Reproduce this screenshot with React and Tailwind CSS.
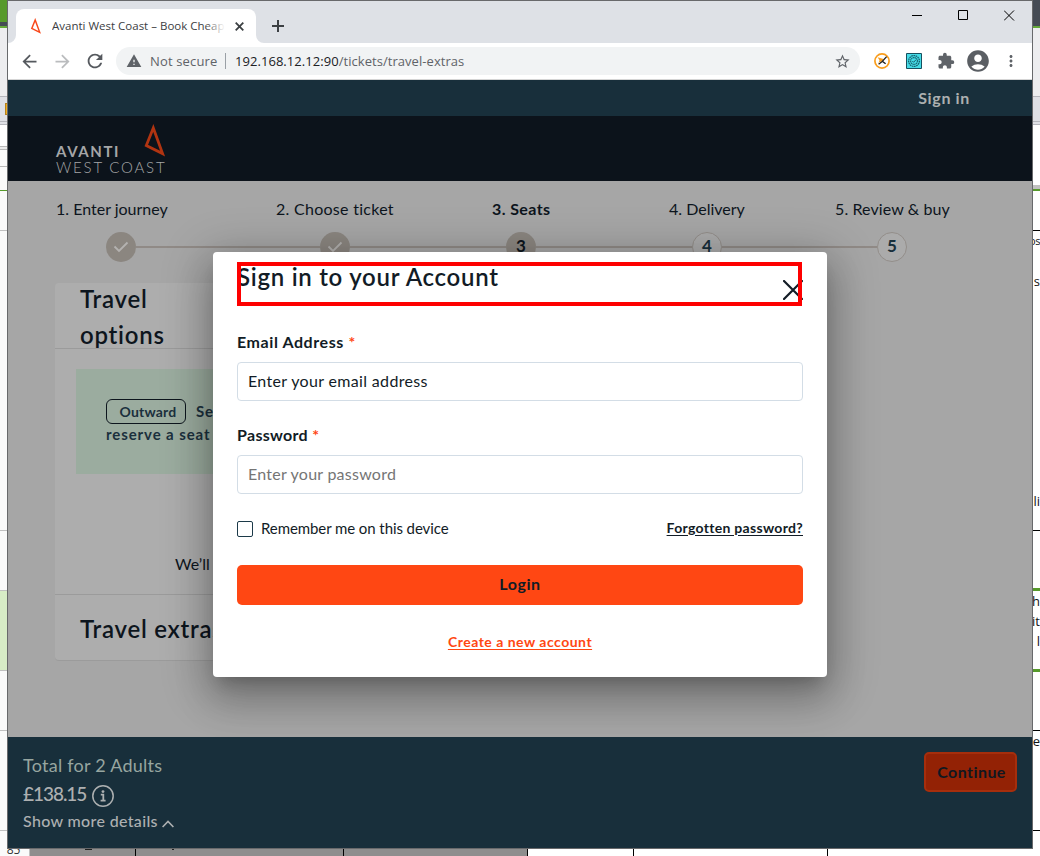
import React from "react";
import {
  MdArrowBack,
  MdArrowForward,
  MdRefresh,
  MdWarning,
  MdStarBorder,
  MdExtension,
  MdAccountCircle,
  MdMoreVert,
} from "react-icons/md";

function AvantiMark({ className, color, stroke }) {
  return (
    <svg className={className} viewBox="0 0 22 33" fill="none">
      <path
        d="M9.3 4 L2.3 21.6 L18.6 29.6 Z"
        stroke={color}
        strokeWidth={stroke}
        strokeLinejoin="miter"
        strokeMiterlimit="8"
      />
    </svg>
  );
}

function LeftStrip() {
  return (
    <div className="flex w-[7px] shrink-0 flex-col overflow-hidden">
      <div className="h-[22px] shrink-0 bg-[#579a2b]" />
      <div className="h-1 shrink-0 bg-[#454b54]" />
      <div className="h-0.5 shrink-0 bg-[#65a93a]" />
      <div className="h-[68px] shrink-0 bg-[#ededef]" />
      <div className="flex h-[25px] shrink-0 items-center justify-end border-t border-[#b6b7bd] bg-[#dfe0e5]">
        <div className="h-3 w-0.5 border-y border-l border-[#b5811c] bg-[#f0b020]" />
      </div>
      <div className="h-1 shrink-0 border-y border-[#b6b7bd] bg-[#dfe0e5]" />
      <div className="h-[21px] shrink-0 bg-white" />
      <div className="h-1 shrink-0 border-y border-[#b9b9b9] bg-[#ececec]" />
      <div className="h-4 shrink-0 bg-[#fafafa]" />
      <div className="h-6 shrink-0 border-t border-[#b9b9b9] bg-[#fafafa]" />
      <div className="h-10 shrink-0 border-t border-[#579a2b] bg-[#fafafa]" />
      <div className="h-[300px] shrink-0 border-t border-[#c0c0c0] bg-[#fafafa]" />
      <div className="h-[60px] shrink-0 border-t border-[#c0c0c0] bg-[#fafafa]" />
      <div className="h-20 shrink-0 border-t border-[#c0c0c0] bg-[#d7ecc6]" />
      <div className="h-[60px] shrink-0 border-t border-[#c0c0c0] bg-[#fafafa]" />
      <div className="h-[100px] shrink-0 border-t border-[#c0c0c0] bg-[#fafafa]" />
      <div className="h-5 shrink-0 border-t border-[#c0c0c0] bg-[#fafafa]" />
    </div>
  );
}

function StripText({ children }) {
  return (
    <div className="flex h-5 shrink-0 items-center justify-end whitespace-pre">{children}</div>
  );
}

function RightStrip() {
  return (
    <div className="flex w-[7px] shrink-0 flex-col overflow-hidden bg-white font-['Open_Sans',sans-serif] text-[13px] leading-5 text-[#111]">
      <div className="h-[26px] shrink-0 bg-[#454b54]" />
      <div className="h-0.5 shrink-0 bg-[#65a93a]" />
      <div className="h-[68px] shrink-0 bg-[#ededef]" />
      <div className="h-[25px] shrink-0 border-t border-[#b6b7bd] bg-[#dfe0e5]" />
      <div className="h-1 shrink-0 border-y border-[#b6b7bd] bg-[#dfe0e5]" />
      <div className="h-[60px] shrink-0 bg-white" />
      <div className="h-1 shrink-0 bg-[#c0c0c0]" />
      <div className="h-[41px] shrink-0 border-t-2 border-[#579a2b]" />
      <div className="flex h-[300px] shrink-0 flex-col border-t border-black">
        <div className="flex h-5 shrink-0 items-center justify-end text-[11px] tracking-[-0.4px]">os</div>
        <div className="h-5" />
        <StripText>s</StripText>
        <div className="h-[200px]" />
        <StripText>li</StripText>
      </div>
      <div className="h-[59px] shrink-0 border-t border-black" />
      <div className="-mt-px flex h-[81px] shrink-0 flex-col border-t-[3px] border-[#579a2b]">
        <StripText>h</StripText>
        <StripText>it</StripText>
        <StripText>e l</StripText>
      </div>
      <div className="h-[61px] shrink-0 border-t-[3px] border-[#579a2b]" />
      <div className="h-[100px] shrink-0 border-t border-black">
        <StripText>e</StripText>
      </div>
      <div className="h-5 shrink-0 border-t border-black" />
    </div>
  );
}

function BottomStrip() {
  return (
    <div className="flex h-[7px] shrink-0 overflow-hidden bg-white">
      <div className="flex w-[30px] shrink-0 items-end justify-center overflow-hidden border-r border-[#c0c0c0] bg-[#fafafa] pr-0.5">
        <span className="font-['Open_Sans',sans-serif] text-[12px] leading-[13px] text-[#333]">85</span>
      </div>
      <div className="flex w-[105px] shrink-0 bg-[#8e8e8e] pl-[55px]">
        <div className="h-px w-[7px] bg-[#222]" />
      </div>
      <div className="flex w-[208px] shrink-0 border-l border-black bg-[#8e8e8e] pl-9">
        <div className="h-px w-0.5 bg-[#222]" />
      </div>
      <div className="w-[184px] shrink-0 border-l border-black bg-[#8e8e8e]" />
      <div className="w-[106px] shrink-0 border-l border-black" />
      <div className="w-[194px] shrink-0 border-l border-black" />
      <div className="grow border-l border-black" />
    </div>
  );
}

function TabBar() {
  return (
    <div className="flex h-[42px] shrink-0 items-end bg-[#dee1e6]">
      <svg className="h-2 w-2 shrink-0" viewBox="0 0 8 8">
        <path d="M8 0 V8 H0 A8 8 0 0 0 8 0Z" fill="#fff" />
      </svg>
      <div className="flex h-[34px] w-[240px] shrink-0 items-center rounded-t-lg bg-white pl-3.5">
        <AvantiMark className="h-4 w-3 shrink-0" color="#f8491c" stroke="3" />
        <div className="relative ml-2.5 w-[173px] overflow-hidden whitespace-nowrap font-['Open_Sans',sans-serif] text-[11.5px] text-[#3c4043]">
          Avanti West Coast – Book Cheap
          <div className="absolute inset-y-0 right-0 w-5 bg-linear-to-r from-transparent to-white" />
        </div>
        <svg className="ml-[10px] h-[9px] w-[9px]" viewBox="0 0 9 9" stroke="#3c4043" strokeWidth="1.8">
          <path d="M.7 .7 L8.3 8.3 M8.3 .7 L.7 8.3" />
        </svg>
      </div>
      <svg className="h-2 w-2 shrink-0" viewBox="0 0 8 8">
        <path d="M0 0 V8 H8 A8 8 0 0 1 0 0Z" fill="#fff" />
      </svg>
      <svg className="mb-[11px] ml-2 h-3 w-3" viewBox="0 0 12 12" stroke="#3c4043" strokeWidth="2">
        <path d="M6 0 V12 M0 6 H12" />
      </svg>
      <div className="flex grow items-center gap-[35px] self-start pt-[9px] pl-[628px]">
        <svg className="h-[11px] w-[11px]" viewBox="0 0 11 11" stroke="#000">
          <path d="M0 5.5 H10" />
        </svg>
        <svg className="h-[11px] w-[11px]" viewBox="0 0 11 11" stroke="#000" fill="none">
          <path d="M.5 .5 H9.5 V9.5 H.5Z" />
        </svg>
        <svg className="h-[11px] w-[11px]" viewBox="0 0 11 11" stroke="#000">
          <path d="M0 .5 L10 10.5 M10 .5 L0 10.5" />
        </svg>
      </div>
    </div>
  );
}

function Toolbar() {
  return (
    <div className="flex h-[37px] shrink-0 items-center border-b border-[#d5d5d5] bg-white font-['Open_Sans',sans-serif] text-[13px]">
      <MdArrowBack className="ml-[11px] h-[21px] w-[21px] shrink-0 text-[#55595e]" />
      <MdArrowForward className="ml-3 h-[21px] w-[21px] shrink-0 text-[#babcbe]" />
      <MdRefresh className="ml-[11px] h-[22px] w-[22px] shrink-0 text-[#55595e]" />
      <div className="ml-2.5 flex h-7 w-[744px] shrink-0 items-center rounded-full bg-[#f1f3f4]">
        <MdWarning className="ml-2.5 h-4 w-4 shrink-0 text-[#5f6368]" />
        <span className="ml-2 w-[75px] pt-px tracking-[0.15px] text-[#5f6368]">Not secure</span>
        <div className="h-4 w-px bg-[#9aa0a6]" />
        <span className="ml-[9px] grow pt-px tracking-[0.05px] text-[#202124]">
          192.168.12.12:90<span className="text-[#5f6368]">/tickets/travel-extras</span>
        </span>
        <MdStarBorder className="mr-[9px] h-[17px] w-[17px] text-[#5f6368]" />
      </div>
      <svg className="ml-3.5 h-4 w-4 shrink-0" viewBox="0 0 16 16">
        <circle cx="8" cy="8" r="7.1" fill="#fff" stroke="#f99d1c" strokeWidth="1.7" />
        <path d="M3.6 4.3 L9.5 6 L8 8.5 L5.4 9 L4 11.5 L5.5 7.2Z" fill="#f99d1c" />
        <path d="M12.6 3.6 L8.2 8.4 L4.6 11.2 M8.6 8.4 L11.6 10.8" stroke="#222" strokeWidth="1.3" fill="none" />
      </svg>
      <svg className="ml-4 h-4 w-4 shrink-0" viewBox="0 0 16 16" fill="none">
        <path d="M.5 .5 H15.5 V15.5 H.5Z" fill="#45dbe6" stroke="#17505f" />
        <circle cx="8" cy="8" r="5.4" stroke="#17606e" strokeWidth="1.3" strokeDasharray="1.6 .6" />
        <circle cx="8" cy="8" r="3.4" stroke="#17606e" strokeWidth="1.1" strokeDasharray="1.4 .4" />
        <path d="M6.3 8 L7.6 9.3 L10 6.7" stroke="#17606e" />
      </svg>
      <MdExtension className="ml-[15px] h-[18px] w-[18px] shrink-0 text-[#5f6368]" />
      <MdAccountCircle className="ml-2.5 h-[26px] w-[26px] shrink-0 text-[#5a5e63]" />
      <MdMoreVert className="ml-[11px] h-[18px] w-[18px] shrink-0 text-[#5f6368]" />
    </div>
  );
}

function SiteHeader() {
  return (
    <>
      <div className="flex h-9 shrink-0 items-center justify-end bg-[#182f3b] pr-[62px] text-base font-bold tracking-[0.65px] text-[#acb0b0]">
        Sign in
      </div>
      <div className="flex h-[65px] shrink-0 bg-[#0c131b] pl-12 text-[#a5a6a7]">
        <div className="flex w-[88px] flex-col pt-[27px]">
          <span className="text-[15px] leading-4 font-bold tracking-[1.6px]">AVANTI</span>
          <span className="text-[15px] leading-4 font-light tracking-[1.8px] whitespace-nowrap">WEST COAST</span>
        </div>
        <AvantiMark className="mt-2 h-[33px] w-[22px]" color="#b13411" stroke="2.8" />
      </div>
    </>
  );
}

function Connector({ className }) {
  return <div className={"h-0.5 bg-[#908a86] " + className} />;
}

function StepDone() {
  return (
    <div className="flex h-[30px] w-[30px] items-center justify-center rounded-full bg-[#8b8680]">
      <svg className="h-3 w-4" viewBox="0 0 16 12" fill="none" stroke="#b4b2b0" strokeWidth="1.8">
        <path d="M1.5 5.5 L6 10 L14.5 1.5" />
      </svg>
    </div>
  );
}

function StepOpen({ n }) {
  return (
    <div className="flex h-[30px] w-[30px] items-center justify-center rounded-full border border-[#938e8a] bg-[#ababab] pb-0.5 text-[17px] font-bold text-[#182f3b]">
      {n}
    </div>
  );
}

function Steps() {
  return (
    <div className="flex flex-col text-base text-[#0d151d]">
      <div className="flex h-[51px] items-center pt-1 pl-12 whitespace-nowrap">
        <span className="w-[220px]">1. Enter journey</span>
        <span className="w-[216px] tracking-[0.28px]">2. Choose ticket</span>
        <span className="w-[177px] font-bold tracking-[0.4px]">3. Seats</span>
        <span className="w-[166px]">4. Delivery</span>
        <span className="tracking-[0.1px]">5. Review &amp; buy</span>
      </div>
      <div className="flex items-center pl-[98px]">
        <StepDone />
        <Connector className="w-[184px]" />
        <StepDone />
        <Connector className="w-[156px]" />
        <div className="flex h-[30px] w-[30px] items-center justify-center rounded-full bg-[#8b8680] pb-0.5 text-[17px] font-bold">
          3
        </div>
        <Connector className="w-[156px]" />
        <StepOpen n="4" />
        <Connector className="w-[155px]" />
        <StepOpen n="5" />
      </div>
    </div>
  );
}

function TravelCard() {
  return (
    <div className="mt-[21px] ml-[47px] flex h-[378px] w-[600px] flex-col rounded border-b border-[#9b9b9b] bg-[#adadad] text-[#0d151d]">
      <div className="flex h-[66px] shrink-0 border-b border-[#9b9b9b] pl-[25px]">
        <h2 className="-mt-0.5 w-[130px] text-[24px] leading-9 font-semibold tracking-[0.75px]">Travel options</h2>
      </div>
      <div className="mt-5 ml-[21px] flex h-[105px] shrink-0 flex-col bg-[#9bac9f] pt-[30px] pl-[30px] text-[15px] font-bold text-[#1b303d]">
        <div className="flex items-center">
          <span className="flex h-[25px] w-20 items-center justify-center rounded-md border border-[#0d151d] pl-1 text-[14px] tracking-[0.2px]">
            Outward
          </span>
          <span className="ml-2.5 tracking-[0.7px]">Seats</span>
        </div>
        <span className="-mt-px leading-[23px] tracking-[0.9px]">reserve a seat</span>
      </div>
      <p className="mt-[78px] ml-[120px] text-base leading-6">We’ll</p>
      <div className="mt-[18px] flex grow items-center border-t border-[#9b9b9b] pt-0.5 pl-[25px]">
        <h2 className="text-[24px] leading-9 font-semibold tracking-[0.75px]">Travel extras</h2>
      </div>
    </div>
  );
}

function SignInModal() {
  return (
    <div className="relative mt-[71px] flex h-[425px] w-[614px] flex-col rounded bg-white px-6 text-[#121c26] shadow-[0_11px_15px_-7px_rgba(0,0,0,0.2),0_24px_38px_3px_rgba(0,0,0,0.14),0_9px_46px_8px_rgba(0,0,0,0.24)]">
      <div className="flex h-[79px] shrink-0 justify-between">
        <h1 className="pt-[7px] text-[24px] leading-9 font-semibold tracking-[0.73px]">Sign in to your Account</h1>
        <svg className="mt-7 h-5 w-5" viewBox="0 0 20 20" stroke="#121c26" strokeWidth="2.2" strokeLinecap="round">
          <path d="M1 1 L19 19 M19 1 L1 19" />
        </svg>
      </div>
      <div className="absolute top-[10px] left-6 h-11 w-[565px] border-4 border-[#fe0000]" />
      <label className="text-[16px] leading-[22px] font-bold tracking-[0.58px]">
        Email Address <span className="text-[#ff4713]">*</span>
      </label>
      <div className="mt-[9px] flex h-[39px] shrink-0 items-center rounded border border-[#d3dde6] pb-0.5 pl-2.5 text-base tracking-[0.34px]">
        Enter your email address
      </div>
      <label className="mt-[23px] text-[16px] leading-[22px] font-bold tracking-[0.3px]">
        Password <span className="text-[#ff4713]">*</span>
      </label>
      <div className="mt-[9px] flex h-[39px] shrink-0 items-center rounded border border-[#d3dde6] pb-0.5 pl-2.5 text-base tracking-[0.24px] text-[#757575]">
        Enter your password
      </div>
      <div className="mt-[25px] flex h-5 shrink-0 items-center">
        <span className="h-4 w-4 rounded-xs border border-[#1c3a49]" />
        <span className="-mt-0.5 ml-2 grow text-[15px] tracking-[-0.08px]">Remember me on this device</span>
        <a className="-mt-1 text-[14px] font-bold tracking-[0.3px] underline underline-offset-[1.5px]">Forgotten password?</a>
      </div>
      <button className="mt-[26px] flex h-10 shrink-0 items-center justify-center rounded-[5px] bg-[#ff4713] pb-0.5 text-base font-bold tracking-[0.55px]">
        Login
      </button>
      <a className="mt-[27px] self-center text-[14px] leading-5 font-bold tracking-[0.5px] text-[#ff4713] underline underline-offset-[1.5px]">
        Create a new account
      </a>
    </div>
  );
}

function Footer() {
  return (
    <div className="relative flex h-[111px] shrink-0 justify-between bg-[#182f3b] pt-[15px] pr-[15px] pl-[15px] text-[#adb0b1]">
      <div className="flex flex-col">
        <span className="text-[18px] leading-[27px] tracking-[0.25px] text-[#97a6a0]">Total for 2 Adults</span>
        <div className="flex h-[30px] items-center">
          <span className="text-[19px] font-medium tracking-[-1.05px]">£138.15</span>
          <svg className="mt-[3px] ml-1.5 h-[22px] w-[22px]" viewBox="0 0 22 22" fill="none" stroke="#adb0b1">
            <circle cx="11" cy="11" r="10.2" strokeWidth="1.5" />
            <circle cx="11" cy="6.6" r="1.4" fill="#adb0b1" stroke="none" />
            <path d="M8.8 9.7 H11.3 V15.4 M8.6 15.6 H13.6" strokeWidth="1.8" />
          </svg>
        </div>
        <div className="flex h-6 items-center">
          <span className="text-[16px] font-medium tracking-[0.34px]">Show more details</span>
          <svg className="mt-1.5 ml-1 h-2 w-3" viewBox="0 0 12 8" fill="none" stroke="#adb0b1" strokeWidth="1.6">
            <path d="M.6 7 L6 1.4 L11.4 7" />
          </svg>
        </div>
      </div>
      <button className="flex h-10 w-[93px] items-center justify-center rounded-[5px] border-2 border-[#a62e0c] bg-[#932205] pl-0.5 text-base font-bold tracking-[0.45px] text-[#101820]">
        Continue
      </button>
    </div>
  );
}

export default function App() {
  return (
    <div className="flex h-[856px] w-[1040px] flex-col overflow-hidden bg-white">
      <div className="flex h-[849px] shrink-0">
        <LeftStrip />
        <div className="flex w-[1026px] shrink-0 flex-col border border-[#68696b] font-['Lato',sans-serif]">
          <TabBar />
          <Toolbar />
          <SiteHeader />
          <div className="relative flex h-[556px] shrink-0 flex-col overflow-hidden bg-[#a6a6a6]">
            <Steps />
            <TravelCard />
            <div className="absolute inset-0 flex items-start justify-center">
              <SignInModal />
            </div>
          </div>
          <Footer />
        </div>
        <RightStrip />
      </div>
      <BottomStrip />
    </div>
  );
}
